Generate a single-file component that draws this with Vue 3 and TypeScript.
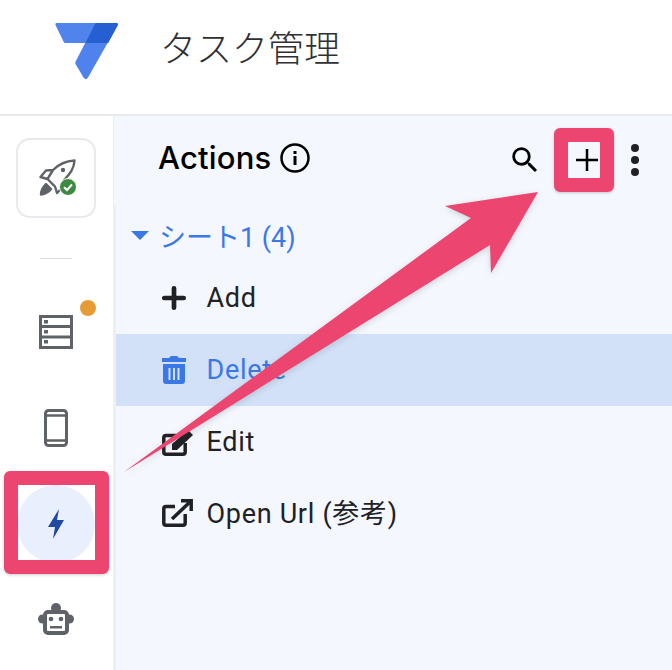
<script setup lang="ts">
interface ActionRow { label: string; icon: string; active?: boolean }
const rows: ActionRow[] = [
  { label: 'Add', icon: 'add' },
  { label: 'Delete', icon: 'delete', active: true },
  { label: 'Edit', icon: 'edit' },
  { label: 'Open Url (参考)', icon: 'open' },
]
</script>

<template>
  <div class="page">
    <header class="topbar">
      <svg class="logo" width="63" height="57" viewBox="0 0 63 57">
        <path d="M.5 2Q0 0 2 0H61Q63.500 0 62.500 2.500L53 20H10.500Q9 20 8.500 18.500Z" fill="#5083ec" />
        <path d="M62.500 2.500L33 54.500Q31 57.500 28.500 54.500L20.500 41Q20 39.800 20.500 38.800L40.500 0H61Q63.500 0 62.500 2.500Z" fill="#4f82ed" />
        <path d="M40.500 0H61Q63.500 0 62.500 2.500L53 20H30.500Z" fill="#255fd2" />
      </svg>
      <h1 class="app-name">タスク管理</h1>
    </header>

    <div class="workspace">
      <aside class="sidebar">
        <div class="deploy-card">
          <svg width="40" height="40" viewBox="0 0 40 40">
            <g fill="none" stroke="#5f6368" stroke-width="2.400" stroke-linejoin="round">
              <path d="M38.500 2.500C30 3 23 6 17 12L10 12.500L4.500 19L11.500 21L19 28.500L21 35L27 29L28 22C34 16 38 11 38.500 2.500Z" />
              <path d="M17 12L11.500 21" />
              <path d="M10 26L15 31C12 35 8 36 5 36.500C5 32 7 29 10 26Z" fill="#5f6368" />
            </g>
            <circle cx="27" cy="12" r="2.200" fill="#5f6368" />
            <circle cx="32" cy="29" r="8.500" fill="#3d8b40" stroke="#fff" stroke-width="1" />
            <path d="M28 29.200L31 32L36 26.500" fill="none" stroke="#fff" stroke-width="2" />
          </svg>
        </div>
        <div class="separator"></div>
        <div class="nav-item">
          <svg width="34" height="34" viewBox="0 0 34 34">
            <path d="M1.500 1.500H32.500V32.500H1.500ZM1.500 11.500H32.500M1.500 22H32.500" fill="none" stroke="#5f6368" stroke-width="3" />
            <rect x="5" y="5" width="4" height="3.500" fill="#5f6368" />
            <rect x="5" y="15" width="4" height="3.500" fill="#5f6368" />
            <rect x="5" y="25" width="4" height="3.500" fill="#5f6368" />
          </svg>
          <span class="dot"></span>
        </div>
        <div class="nav-item">
          <svg width="24" height="38" viewBox="0 0 24 38">
            <rect x="1.500" y="1.500" width="21" height="35" rx="3" fill="none" stroke="#5f6368" stroke-width="3" />
            <path d="M1.500 6.500H22.500M1.500 31.500H22.500" stroke="#5f6368" stroke-width="2.500" />
          </svg>
        </div>
        <div class="nav-item">
          <div class="nav-current">
            <svg width="16" height="30" viewBox="0 0 16 30">
              <path d="M11 0L0 18H7L5 30L16 11H9Z" fill="#2149a4" />
            </svg>
          </div>
        </div>
        <div class="nav-item">
          <svg width="36" height="34" viewBox="0 0 36 34">
            <circle cx="18" cy="5" r="5" fill="#5f6368" />
            <circle cx="4.500" cy="16" r="4.500" fill="#5f6368" />
            <circle cx="31.500" cy="16" r="4.500" fill="#5f6368" />
            <rect x="5" y="7" width="26" height="25" rx="5" fill="#5f6368" />
            <rect x="9" y="11" width="18" height="17" rx="1" fill="#fff" />
            <circle cx="13" cy="16" r="2.300" fill="#5f6368" />
            <circle cx="23" cy="16" r="2.300" fill="#5f6368" />
            <rect x="12" y="23" width="12" height="2.500" fill="#5f6368" />
          </svg>
        </div>
      </aside>

      <main class="panel">
        <div class="panel-head">
          <h2 class="panel-title">Actions</h2>
          <svg class="info" width="32" height="32" viewBox="0 0 32 32">
            <circle cx="16" cy="16" r="13.500" fill="none" stroke="#000" stroke-width="2.500" />
            <rect x="14.500" y="14" width="3" height="9" fill="#000" />
            <rect x="14.500" y="9" width="3" height="3" fill="#000" />
          </svg>
          <div class="tools">
            <svg class="tool-search" width="34" height="34" viewBox="0 0 24 24">
              <path d="M15.500 14h-.79l-.28-.27A6.471 6.471 0 0 0 16 9.500 6.500 6.500 0 1 0 9.500 16c1.610 0 3.090-.59 4.230-1.570l.27.28v.79l5 4.990L20.490 19l-4.990-5zm-6 0C7.010 14 5 11.990 5 9.500S7.010 5 9.500 5 14 7.010 14 9.500 11.990 14 9.500 14z" fill="#000" />
            </svg>
            <svg class="tool-add" width="22" height="22" viewBox="0 0 22 22">
              <path d="M0 11H22M11 0V22" stroke="#000" stroke-width="2.500" />
            </svg>
            <div class="tool-more"><i></i><i></i><i></i></div>
          </div>
        </div>

        <div class="section-head">
          <span class="caret"></span>
          <span>シート1 (4)</span>
        </div>

        <div v-for="row in rows" :key="row.label" class="row" :class="{ active: row.active }">
          <svg class="row-icon" width="32" height="32" viewBox="0 0 32 32">
            <path v-if="row.icon === 'add'" d="M2.300 16H21.700M12 6.300V25.700" fill="none" stroke="currentColor" stroke-width="4.700" stroke-linecap="round" />
            <template v-else-if="row.icon === 'delete'">
              <path d="M1 10H23V27Q23 30 20 30H4Q1 30 1 27ZM0 4H7L9 2H15L17 4H24V8H0Z" fill="currentColor" />
              <path d="M7.500 14V26M12 14V26M16.500 14V26" stroke="#d2e1f8" stroke-width="2" />
            </template>
            <template v-else-if="row.icon === 'edit'">
              <path d="M14 9.500H4Q1.800 9.500 1.800 11.700V26Q1.800 28.200 4 28.200H21Q23.200 28.200 23.200 26V17" fill="none" stroke="currentColor" stroke-width="3.500" />
              <path d="M10 18L26 4L31 9L15 24H10Z" fill="currentColor" />
            </template>
            <template v-else>
              <path d="M13 8.500H4Q1.800 8.500 1.800 10.700V25Q1.800 27.200 4 27.200H21Q23.200 27.200 23.200 25V16" fill="none" stroke="currentColor" stroke-width="3.500" />
              <path d="M19 2.800H29.200V13M29 3L10 21" fill="none" stroke="currentColor" stroke-width="3.500" />
            </template>
          </svg>
          <span class="row-label">{{ row.label }}</span>
        </div>
      </main>
    </div>

    <svg class="arrow" width="672" height="670" viewBox="0 0 672 670">
      <polygon points="538,192 445,206 471,218 124,472 490,245 491,273" fill="#ec456f" />
    </svg>
    <div class="frame frame-add"></div>
    <div class="frame frame-nav"></div>
  </div>
</template>

<style>
html, body { margin: 0; background: #fff; }
</style>

<style scoped>
.page {
  position: relative;
  width: 672px;
  height: 670px;
  overflow: hidden;
  font-family: Roboto, "Noto Sans CJK JP", sans-serif;
  background: #fff;
}
.topbar {
  display: flex;
  align-items: center;
  padding-left: 55px;
  box-sizing: border-box;
  border-bottom: 2px solid #e8eaed;
  height: 116px;
}
.logo { margin-top: -11px; }
.app-name {
  margin: -22px 0 0 42px;
  font-family: "Noto Sans CJK JP", sans-serif;
  font-size: 36px;
  font-weight: 300;
  color: #2f3033;
  line-height: 1;
}
.workspace { display: flex; height: 554px; }
.sidebar {
  flex: none;
  width: 116px;
  box-sizing: border-box;
  border-right: 3px solid #eeeff2;
  padding-top: 22px;
  display: flex;
  flex-direction: column;
  align-items: flex-start;
}
.deploy-card {
  flex: none;
  box-sizing: border-box;
  width: 80px;
  height: 80px;
  margin-left: 16px;
  border: 2px solid #e8eaed;
  border-radius: 14px;
  display: flex;
  align-items: center;
  justify-content: center;
}
.separator {
  flex: none;
  width: 32px;
  height: 1px;
  background: #dadce0;
  margin: 40px 0 25px 40px;
}
.nav-item {
  position: relative;
  flex: none;
  width: 112px;
  height: 96px;
  display: flex;
  align-items: center;
  justify-content: center;
}
.dot {
  position: absolute;
  left: 80px;
  top: 16px;
  width: 16px;
  height: 16px;
  border-radius: 50%;
  background: #e69c35;
}
.nav-current {
  flex: none;
  width: 78px;
  height: 78px;
  border-radius: 50%;
  background: #e9effc;
  display: flex;
  align-items: center;
  justify-content: center;
}
.panel {
  flex: 1;
  min-width: 0;
  background: #f4f7fe;
}
.panel-head {
  height: 89px;
  margin-left: -2px;
  padding-left: 44px;
  padding-bottom: 6px;
  box-sizing: border-box;
  background: #f4f7fe;
  display: flex;
  align-items: center;
}
.panel-title {
  margin: 0;
  font-family: Inter, Roboto, sans-serif;
  font-size: 31px;
  font-weight: 500;
  color: #000;
  letter-spacing: .2px;
}
.info { margin-left: 8px; }
.tools {
  margin-left: auto;
  display: flex;
  align-items: center;
  margin-top: 5px;
}
.tool-add { margin-left: 34px; }
.tool-more {
  margin: 0 33px 0 33px;
  display: flex;
  flex-direction: column;
  gap: 4px;
}
.tool-more i {
  display: block;
  width: 8px;
  height: 8px;
  border-radius: 50%;
  background: #202124;
}
.section-head {
  height: 57px;
  box-sizing: border-box;
  padding: 3px 0 0 15px;
  display: flex;
  align-items: center;
  font-size: 27px;
  color: #3b78e7;
}
.caret {
  width: 0;
  height: 0;
  margin-right: 10px;
  border-left: 9px solid transparent;
  border-right: 9px solid transparent;
  border-top: 9px solid #3b78e7;
}
.row {
  height: 72px;
  padding-left: 46px;
  display: flex;
  align-items: center;
  gap: 12.5px;
  font-size: 27px;
  color: #202124;
}
.row-label {
  line-height: 1;
  letter-spacing: .7px;
}
.row.active {
  background: #d2e1f8;
  color: #3b78e7;
}
.row-icon { flex: none; }
.arrow {
  position: absolute;
  left: 0;
  top: 0;
  filter: drop-shadow(0 2px 3px rgba(60, 64, 67, .2));
}
.frame {
  position: absolute;
  box-sizing: border-box;
  border: 14px solid #ec456f;
  border-radius: 6px;
  box-shadow: 0 1px 3px rgba(60, 64, 67, .25);
}
.frame-add { left: 554px; top: 128px; width: 60px; height: 64px; }
.frame-nav { left: 4px; top: 471px; width: 105px; height: 103px; }
</style>
